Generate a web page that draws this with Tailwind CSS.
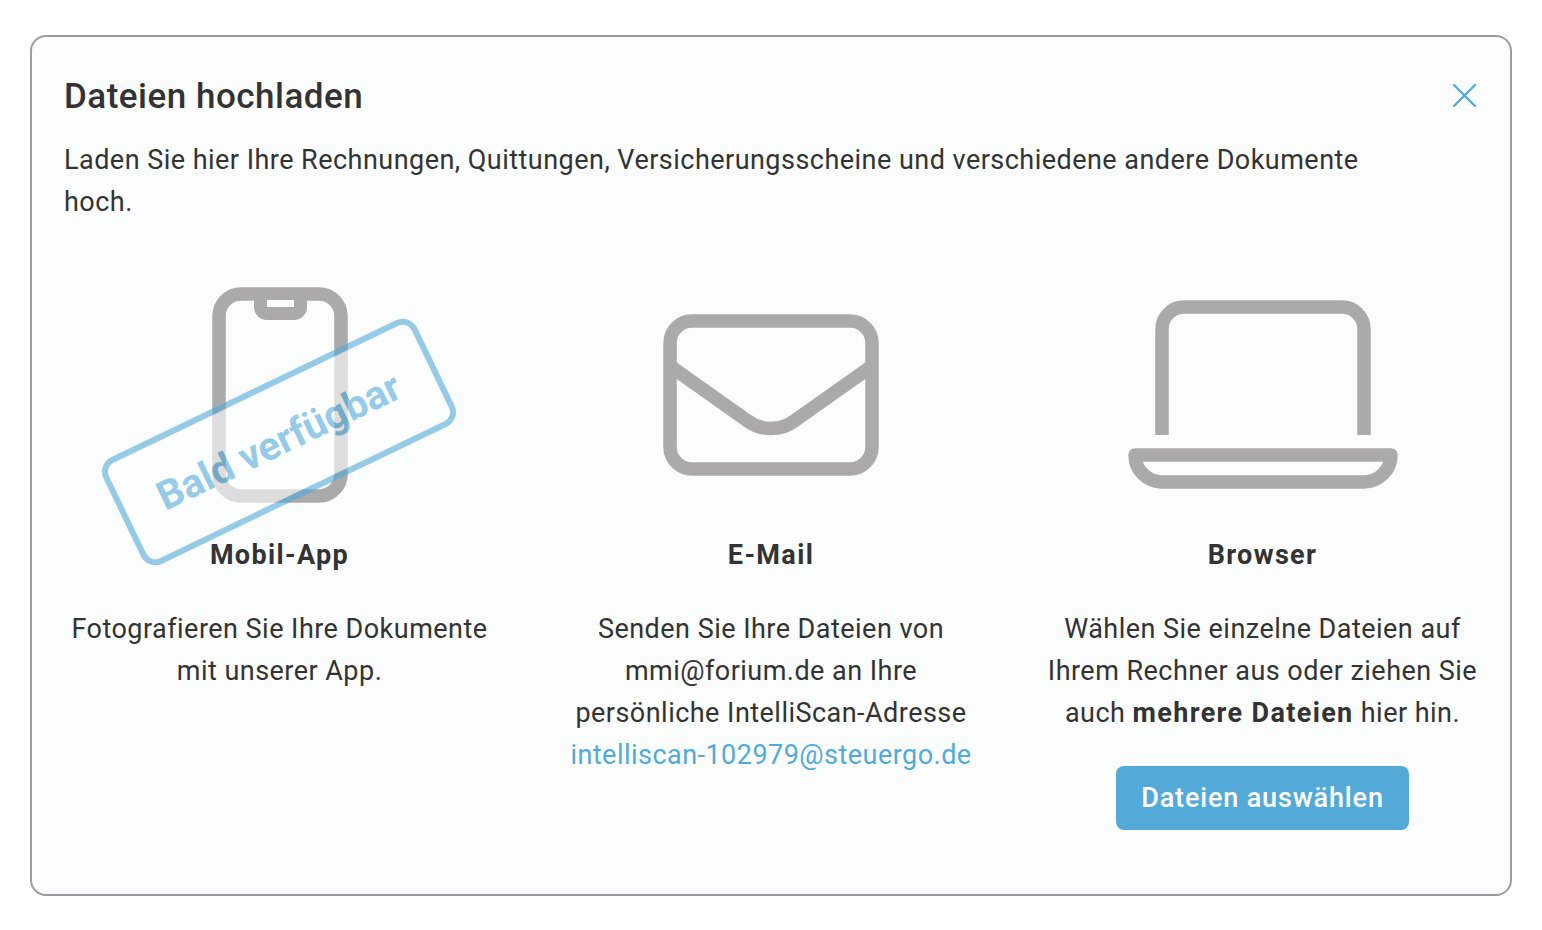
<!DOCTYPE html>
<html lang="de">
  <head>
    <meta charset="UTF-8" />
    <meta name="viewport" content="width=device-width, initial-scale=1.0" />
    <title>Dateien hochladen</title>
    <script src="https://cdn.jsdelivr.net/npm/@tailwindcss/browser@4"></script>
  </head>
  <body class="bg-white h-[930px] overflow-hidden font-['Roboto',sans-serif] text-[#333333]">
    <div class="pt-[35px] px-[30px]">
      <div class="h-[861px] border-2 border-[#999d9f] rounded-[16px] bg-[#fbfdfd] px-[32px] pt-[32px]">
        <div class="flex justify-between items-start">
          <h2 class="text-[35px] leading-[56px] h-[52px] font-medium tracking-[0.5px]">Dateien hochladen</h2>
          <button class="mt-[12px] w-[28px] h-[28px] text-[#53aad9]">
            <svg viewBox="0 0 28 28" class="w-[28px] h-[28px]" fill="none" stroke="currentColor" stroke-width="2.4" stroke-linecap="round">
              <path d="M4 4 25 25M25 4 4 25" />
            </svg>
          </button>
        </div>
        <p class="mt-[18px] text-[27px] leading-[42px] max-w-[1320px] tracking-[0.47px]">
          Laden Sie hier Ihre Rechnungen, Quittungen, Versicherungsscheine und verschiedene andere Dokumente hoch.
        </p>

        <div class="mt-[42px] grid grid-cols-[431px_431px_431px] gap-x-[60.5px] text-center text-[27px] leading-[42px] tracking-[0.47px]">
          <!-- Mobil-App -->
          <div class="relative flex flex-col items-center">
            <div class="h-[260px] flex items-center justify-center">
              <svg viewBox="0 0 136 216" class="w-[136px] h-[216px]" fill="none" stroke="#aaaaaa" stroke-width="13.5">
                <rect x="7" y="7" width="122" height="202" rx="22" />
                <path d="M42 7H95V20A13 13 0 0 1 82 33H55A13 13 0 0 1 42 20Z" fill="#aaaaaa" stroke="none" />
                <rect x="55" y="13" width="27" height="7" fill="#fbfdfd" stroke="none" />
              </svg>
            </div>
            <div class="absolute left-[41px] top-[118px] w-[348px] h-[118px] flex items-center justify-center border-[6px] border-[#53aad9] rounded-[16px] bg-white opacity-60 rotate-[-25.7deg]">
              <span class="text-[40px] font-bold text-[#53aad9] whitespace-nowrap tracking-normal">Bald verfügbar</span>
            </div>
            <h3 class="relative font-bold mt-[9px] tracking-[1.35px]">Mobil-App</h3>
            <p class="mt-[32px]">Fotografieren Sie Ihre Dokumente mit unserer App.</p>
          </div>

          <!-- E-Mail -->
          <div class="flex flex-col items-center">
            <div class="h-[260px] flex items-center justify-center">
              <svg viewBox="0 0 216 162" class="w-[216px] h-[162px]" fill="none" stroke="#aaaaaa" stroke-width="13.5">
                <rect x="7" y="7" width="202" height="148" rx="22" />
                <path d="M7 52 84 106.500a40 40 0 0 0 48 0L209 52" />
              </svg>
            </div>
            <h3 class="font-bold mt-[9px] tracking-[1.35px]">E-Mail</h3>
            <p class="mt-[32px]">Senden Sie Ihre Dateien von mmi@forium.de an Ihre persönliche IntelliScan-Adresse <a class="text-[#53aad9]">intelliscan-102979@steuergo.de</a></p>
          </div>

          <!-- Browser -->
          <div class="flex flex-col items-center">
            <div class="h-[260px] flex items-center justify-center">
              <svg viewBox="0 0 270 190" class="w-[270px] h-[190px]" fill="none" stroke="#aaaaaa" stroke-width="13.5">
                <path d="M34 135V29A22 22 0 0 1 56 7H214A22 22 0 0 1 236 29V135" />
                <path d="M7 155H263A27 27 0 0 1 236 182H34A27 27 0 0 1 7 155Z" stroke-linejoin="round" />
              </svg>
            </div>
            <h3 class="font-bold mt-[9px] tracking-[1.35px]">Browser</h3>
            <p class="mt-[32px]">Wählen Sie einzelne Dateien auf Ihrem Rechner aus oder ziehen Sie auch <b class="font-bold tracking-[1.35px]">mehrere Dateien</b> hier hin.</p>
            <button class="mt-[32px] w-[293px] h-[64px] rounded-[8px] bg-[#53aad9] text-white font-medium tracking-[0.85px]">Dateien auswählen</button>
          </div>
        </div>
      </div>
    </div>
  </body>
</html>
